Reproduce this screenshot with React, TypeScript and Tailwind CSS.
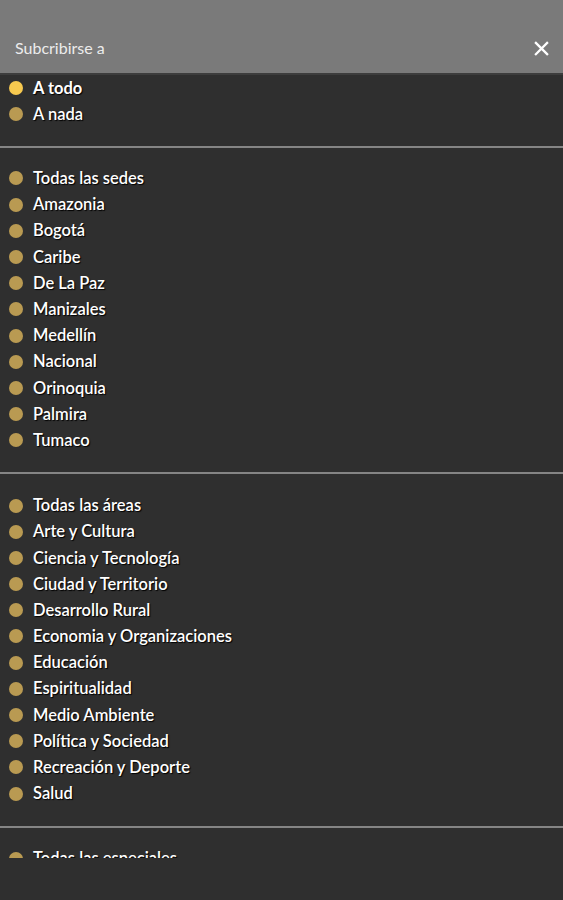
import React from 'react';

const sections: string[][] = [
  ['A todo', 'A nada'],
  [
    'Todas las sedes',
    'Amazonia',
    'Bogotá',
    'Caribe',
    'De La Paz',
    'Manizales',
    'Medellín',
    'Nacional',
    'Orinoquia',
    'Palmira',
    'Tumaco',
  ],
  [
    'Todas las áreas',
    'Arte y Cultura',
    'Ciencia y Tecnología',
    'Ciudad y Territorio',
    'Desarrollo Rural',
    'Economia y Organizaciones',
    'Educación',
    'Espiritualidad',
    'Medio Ambiente',
    'Política y Sociedad',
    'Recreación y Deporte',
    'Salud',
  ],
  ['Todas las especiales'],
];

const Row = ({ label, active }: { label: string; active?: boolean }) => (
  <div className="flex items-center h-[26.2px]">
    <span
      className={`ml-[9px] w-[14px] h-[14px] rounded-full ${active ? 'bg-[#f7c94f]' : 'bg-[#b99a52]'}`}
    />
    <span
      className={`ml-[10px] text-[16.5px] text-white [text-shadow:1px_1px_1px_#000] ${active ? 'font-bold' : 'font-semibold'}`}
    >
      {label}
    </span>
  </div>
);

export default function App() {
  return (
    <div
      className="w-[563px] h-[900px] bg-[#2f2f2f] flex flex-col overflow-hidden"
      style={{ fontFamily: 'Lato, "Open Sans", sans-serif' }}
    >
      {/* header */}
      <div className="h-[73px] bg-[#7a7a7a] flex items-end justify-between px-[15px] pb-[13px] shrink-0">
        <span className="text-[16px] text-[#ececec]">Subcribirse a</span>
        <svg width="15" height="15" viewBox="0 0 16 16" className="mb-[4px] mr-[-1px]">
          <path d="M2 2 L14 14 M14 2 L2 14" stroke="#fff" strokeWidth="2.4" strokeLinecap="square" />
        </svg>
      </div>
      <div className="h-[2px] bg-[#3d3d3d] shrink-0" />

      {/* list */}
      <div className="h-[783px] overflow-hidden shrink-0">
        {sections.map((items, i) => (
          <div key={i}>
            {i > 0 && <div className="h-[2px] bg-[#858585]" />}
            <div className={i === 0 ? 'pt-0 pb-[19px]' : i === 1 ? 'pt-[17px] pb-[19px]' : 'pt-[18px] pb-[19px]'}>
              {items.map((label, j) => (
                <Row key={label} label={label} active={i === 0 && j === 0} />
              ))}
            </div>
          </div>
        ))}
      </div>
    </div>
  );
}
